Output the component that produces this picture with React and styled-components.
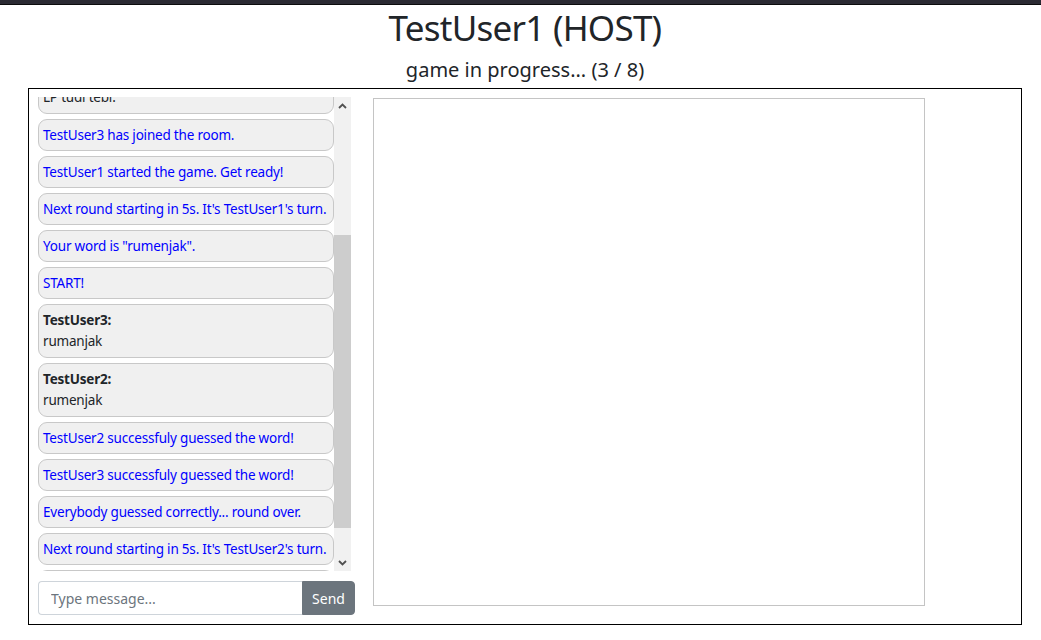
import React, { useLayoutEffect, useRef } from 'react';
import styled, { createGlobalStyle } from 'styled-components';

const messages = [
  { system: true, text: 'TestUser2 has joined the room.' },
  { user: 'TestUser2', text: 'Živjo!' },
  { user: 'TestUser1', text: 'LP tudi tebi.' },
  { system: true, text: 'TestUser3 has joined the room.', anchor: true },
  { system: true, text: 'TestUser1 started the game. Get ready!' },
  { system: true, text: "Next round starting in 5s. It's TestUser1's turn." },
  { system: true, text: 'Your word is "rumenjak".' },
  { system: true, text: 'START!' },
  { user: 'TestUser3', text: 'rumanjak' },
  { user: 'TestUser2', text: 'rumenjak' },
  { system: true, text: 'TestUser2 successfuly guessed the word!' },
  { system: true, text: 'TestUser3 successfuly guessed the word!' },
  { system: true, text: 'Everybody guessed correctly... round over.' },
  { system: true, text: "Next round starting in 5s. It's TestUser2's turn." },
  { system: true, text: 'Your word is "miza".' },
];

const App = () => {
  const listRef = useRef(null);
  const anchorRef = useRef(null);

  useLayoutEffect(() => {
    const list = listRef.current;
    const anchor = anchorRef.current;
    if (list && anchor) {
      const offset =
        anchor.getBoundingClientRect().top - list.getBoundingClientRect().top + list.scrollTop;
      list.scrollTop = offset - 22;
    }
  }, []);

  return (
    <>
      <GlobalStyle />
      <TopBar />
      <Title>TestUser1 (HOST)</Title>
      <Subtitle>game in progress... (3 / 8)</Subtitle>
      <Board>
        <ChatColumn>
          <ChatScroll>
            <MessageList ref={listRef}>
              {messages.map((m, i) => (
                <Message
                  key={i}
                  ref={m.anchor ? anchorRef : null}
                  $system={m.system}
                >
                  {m.user && <Author>{m.user}:</Author>}
                  <Line>{m.text}</Line>
                </Message>
              ))}
            </MessageList>
            <ScrollBar>
              <ScrollButton>
                <svg width="9" height="6" viewBox="0 0 9 6">
                  <polyline points="1,5 4.5,1.5 8,5" fill="none" stroke="#505050" strokeWidth="1.8" />
                </svg>
              </ScrollButton>
              <Track>
                <Thumb $top={121} $height={293} />
              </Track>
              <ScrollButton>
                <svg width="9" height="6" viewBox="0 0 9 6">
                  <polyline points="1,1 4.5,4.5 8,1" fill="none" stroke="#505050" strokeWidth="1.8" />
                </svg>
              </ScrollButton>
            </ScrollBar>
          </ChatScroll>
          <InputRow>
            <MessageInput placeholder="Type message..." />
            <SendButton>Send</SendButton>
          </InputRow>
        </ChatColumn>
        <DrawingCanvas />
      </Board>
    </>
  );
};

export default App;

const GlobalStyle = createGlobalStyle`
  body {
    margin: 0;
    font-family: "Noto Sans", "Open Sans", sans-serif;
    color: #212529;
    background: #fff;
  }
  * {
    box-sizing: border-box;
  }
`;

const TopBar = styled.div`
  height: 5px;
  background: #2b2a33;
  border-bottom: 1px solid #0c0c0d;
`;

const Title = styled.h1`
  margin: 0;
  padding-left: 9px;
  font-size: 35px;
  font-weight: 400;
  letter-spacing: -0.75px;
  line-height: 45px;
  text-align: center;
`;

const Subtitle = styled.h5`
  margin: 8px 0 6px;
  padding-left: 9px;
  font-size: 20px;
  font-weight: 400;
  line-height: 24px;
  text-align: center;
`;

const Board = styled.div`
  display: flex;
  gap: 18px;
  margin: 0 19px 0 28px;
  padding: 8px 9px 9px;
  border: 1px solid #000;
`;

const ChatColumn = styled.div`
  display: flex;
  flex-direction: column;
  gap: 10px;
  width: 317px;
`;

const ChatScroll = styled.div`
  display: flex;
  width: 313px;
  height: 474px;
`;

const MessageList = styled.div`
  flex: 1;
  display: flex;
  flex-direction: column;
  gap: 5px;
  overflow: hidden;
`;

const Message = styled.div`
  flex-shrink: 0;
  padding: 5px 4px;
  border: 1px solid #c8c8c8;
  border-radius: 9px;
  background: #f0f0f0;
  font-size: 13.5px;
  letter-spacing: -0.2px;
  line-height: ${({ $system }) => ($system ? '20px' : '21px')};
  color: ${({ $system }) => ($system ? '#0000ff' : '#212529')};
  white-space: nowrap;
`;

const Author = styled.div`
  font-weight: 700;
`;

const Line = styled.div``;

const ScrollBar = styled.div`
  display: flex;
  flex-direction: column;
  width: 17px;
  background: #f1f1f1;
`;

const ScrollButton = styled.div`
  display: flex;
  align-items: center;
  justify-content: center;
  height: 17px;
`;

const Track = styled.div`
  flex: 1;
`;

const Thumb = styled.div`
  margin-top: ${({ $top }) => $top}px;
  height: ${({ $height }) => $height}px;
  background: #cdcdcd;
`;

const InputRow = styled.div`
  display: flex;
  height: 34px;
`;

const MessageInput = styled.input`
  flex: 1;
  min-width: 0;
  padding: 6px 12px;
  border: 1px solid #ced4da;
  border-right: none;
  border-radius: 4px 0 0 4px;
  font-family: inherit;
  font-size: 14px;
  color: #212529;
  outline: none;
  &::placeholder {
    color: #6c757d;
  }
`;

const SendButton = styled.button`
  width: 53px;
  border: 1px solid #6c757d;
  border-radius: 0 4px 4px 0;
  background: #6c757d;
  color: #fff;
  font-family: inherit;
  font-size: 14px;
`;

const DrawingCanvas = styled.div`
  margin-top: 1px;
  width: 552px;
  height: 508px;
  border: 1px solid #c4c4c4;
  background: #fff;
`;
